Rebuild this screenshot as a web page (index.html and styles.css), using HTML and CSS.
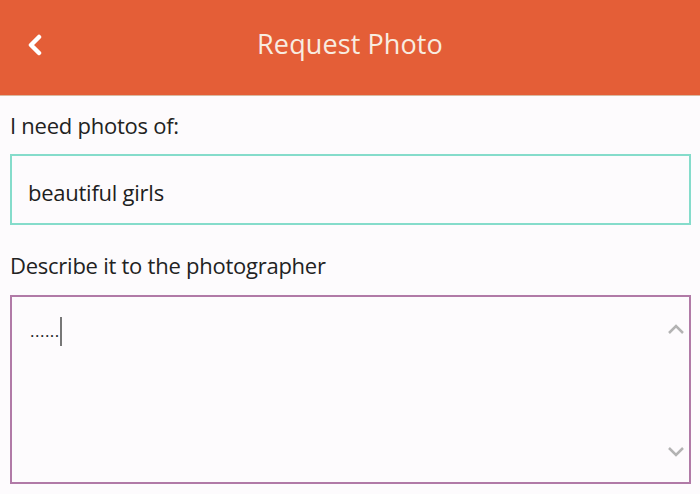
FILE: index.html
```html
<!DOCTYPE html>
<html>
<head>
<meta charset="utf-8">
<link rel="stylesheet" href="styles.css">
</head>
<body>
<div class="app">
  <header class="topbar">
    <span class="back">
      <svg width="16" height="22" viewBox="0 0 16 22"><path d="M12 3 L4 11 L12 19" fill="none" stroke="#fff" stroke-width="4.5" stroke-linecap="round" stroke-linejoin="round"/></svg>
    </span>
    <h1 class="title">Request Photo</h1>
  </header>
  <main class="form">
    <label class="label">I need photos of:</label>
    <div class="input">beautiful girls</div>
    <label class="label label-2">Describe it to the photographer</label>
    <div class="textarea">
      <span class="dots">......</span><span class="caret"></span>
      <div class="scroll">
        <svg width="18" height="12" viewBox="0 0 18 12"><path d="M2 10 L9 3 L16 10" fill="none" stroke="#b3b3b3" stroke-width="2.5"/></svg>
        <svg width="18" height="12" viewBox="0 0 18 12"><path d="M2 2 L9 9 L16 2" fill="none" stroke="#b3b3b3" stroke-width="2.5"/></svg>
      </div>
    </div>
  </main>
</div>
</body>
</html>
```
FILE: styles.css
```css
* { box-sizing: border-box; }
html, body { margin: 0; padding: 0; }
body {
  width: 700px;
  height: 494px;
  background: #fdfbfd;
  font-family: "Open Sans", "Noto Sans", sans-serif;
  color: #222;
  overflow: hidden;
}
.topbar {
  height: 96px;
  background: #e45e37;
  display: flex;
  align-items: center;
  justify-content: center;
  position: relative;
  border-bottom: 1px solid #d9b9a0;
  padding-bottom: 7px;
}
.back {
  position: absolute;
  left: 27px;
  top: 34px;
  display: flex;
}
.title {
  margin: 0;
  font-weight: 400;
  font-size: 27px;
  line-height: 36px;
  color: #f8ece0;
  letter-spacing: 0.1px;
}
.form {
  padding: 14px 9px 0 10px;
  display: flex;
  flex-direction: column;
}
.label {
  font-size: 22px;
  line-height: 30px;
  color: #222;
  letter-spacing: -0.25px;
}
.input {
  margin-top: 14px;
  height: 71px;
  border: 2px solid #85dccb;
  padding: 21px 16px 0;
  font-size: 22px;
  line-height: 30px;
  letter-spacing: -0.25px;
  color: #1e1e1e;
}
.label-2 { margin-top: 25px; }
.textarea {
  margin-top: 15px;
  height: 189px;
  border: 2px solid #b17aa7;
  position: relative;
  padding: 18px 18px;
  display: flex;
  align-items: flex-start;
}
.dots {
  font-size: 17px;
  line-height: 28px;
  letter-spacing: 0.5px;
  color: #222;
  margin-top: 2px;
}
.caret {
  display: inline-block;
  width: 2px;
  height: 29px;
  background: #777;
  margin-top: 2px;
}
.scroll {
  position: absolute;
  right: 4px;
  top: 26px;
  bottom: 24px;
  display: flex;
  flex-direction: column;
  justify-content: space-between;
}
```
